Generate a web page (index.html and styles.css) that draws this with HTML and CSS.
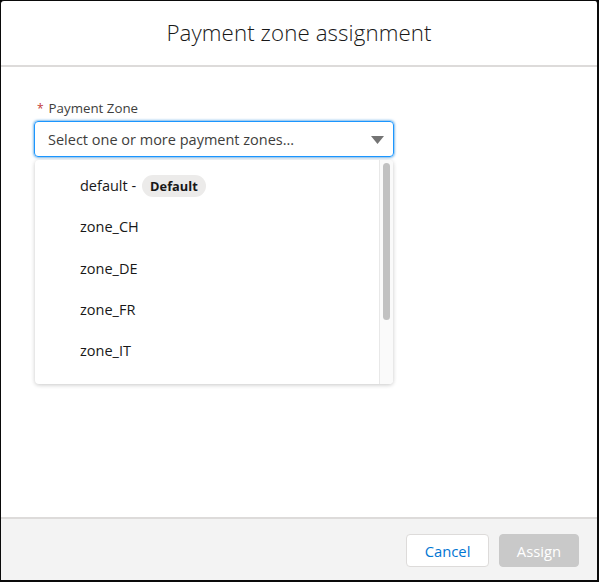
FILE: index.html
```html
<!DOCTYPE html>
<html>
<head>
<meta charset="utf-8">
<link rel="stylesheet" href="styles.css">
</head>
<body>
<div class="modal">
  <header class="modal-header">
    <h1 class="title">Payment zone assignment</h1>
  </header>
  <main class="modal-body">
    <label class="field-label"><abbr class="required">*</abbr>Payment Zone</label>
    <div class="combobox">
      <div class="input">
        <span class="placeholder">Select one or more payment zones...</span>
        <svg class="caret" width="13" height="8" viewBox="0 0 13 8"><path d="M0 0 H13 L6.5 8 Z" fill="#747474"/></svg>
      </div>
      <div class="dropdown">
        <ul class="options">
          <li class="option">default -<span class="badge">Default</span></li>
          <li class="option">zone_CH</li>
          <li class="option">zone_DE</li>
          <li class="option">zone_FR</li>
          <li class="option">zone_IT</li>
        </ul>
        <div class="scrolltrack"><div class="thumb"></div></div>
      </div>
    </div>
  </main>
  <footer class="modal-footer">
    <button class="btn btn-neutral">Cancel</button>
    <button class="btn btn-disabled">Assign</button>
  </footer>
</div>
</body>
</html>
```
FILE: styles.css
```css
html, body {
  margin: 0;
  padding: 0;
  background: #000;
}
body {
  width: 599px;
  height: 582px;
  font-family: "Open Sans", "Liberation Sans", sans-serif;
}
.modal {
  box-sizing: border-box;
  width: 599px;
  height: 582px;
  margin: 0;
  border-style: solid;
  border-color: #0a0a0a;
  border-width: 1px 2px 2px 1px;
  background: #fff;
  border-radius: 4px 4px 0 0;
  display: flex;
  flex-direction: column;
  overflow: hidden;
}
.modal-header {
  height: 64px;
  border-bottom: 2px solid #dddbda;
  display: flex;
  align-items: center;
  justify-content: center;
  flex: none;
}
.title {
  margin: 0 0 1px 0;
  font-weight: 300;
  font-size: 22.3px;
  color: #181818;
  letter-spacing: 0.1px;
}
.modal-body {
  flex: 1;
  padding: 32px 0 0 33px;
  position: relative;
}
.field-label {
  display: block;
  height: 18px;
  line-height: 18px;
  font-size: 13.3px;
  color: #3e3e3c;
  margin-bottom: 4px;
}
.required {
  color: #c23934;
  text-decoration: none;
  margin: 0 5px 0 3px;
  font-size: 12px;
}
.combobox {
  position: relative;
  width: 360px;
}
.input {
  box-sizing: border-box;
  height: 36px;
  border: 1px solid #1b96ff;
  border-radius: 4px;
  box-shadow: 0 0 3px #0176d3;
  display: flex;
  align-items: center;
  justify-content: space-between;
  padding: 0 9px 0 13px;
}
.placeholder {
  font-size: 14.5px;
  color: #3e3e3c;
}
.caret {
  display: block;
  margin-top: 1px;
}
.dropdown {
  position: absolute;
  left: 1px;
  top: 39px;
  width: 358px;
  height: 224px;
  box-sizing: border-box;
  background: #fff;
  border-radius: 4px;
  box-shadow: 0 1px 4px rgba(0, 0, 0, 0.22);
  display: flex;
  overflow: hidden;
}
.options {
  list-style: none;
  margin: 0;
  padding: 5px 0 0 45px;
  flex: 1;
}
.option {
  height: 41.25px;
  display: flex;
  align-items: center;
  font-size: 14.5px;
  color: #181818;
}
.badge {
  margin-left: 6px;
  height: 22px;
  padding: 0 8px;
  border-radius: 11px;
  background: #ecebea;
  font-size: 12.8px;
  font-weight: 700;
  display: inline-flex;
  align-items: center;
  color: #181818;
}
.scrolltrack {
  width: 14px;
  flex: none;
  border-left: 1px solid #e8e8e8;
  background: #fafafa;
  padding: 3px 0 0 3px;
  box-sizing: border-box;
}
.thumb {
  width: 7px;
  height: 157px;
  border-radius: 4px;
  background: #c1c1c1;
}
.modal-footer {
  flex: none;
  height: 63px;
  box-sizing: border-box;
  border-top: 2px solid #dddbda;
  background: #f3f3f3;
  display: flex;
  justify-content: flex-end;
  align-items: flex-start;
  gap: 10px;
  padding: 15px 18px 0 0;
}
.btn {
  height: 33px;
  border-radius: 4px;
  font-family: inherit;
  font-size: 14.8px;
  padding: 0;
}
.btn-neutral {
  width: 83px;
  background: #fff;
  border: 1px solid #dddbda;
  color: #0176d3;
}
.btn-disabled {
  width: 80px;
  background: #c9c9c9;
  border: 1px solid #c9c9c9;
  color: #fff;
}
```
